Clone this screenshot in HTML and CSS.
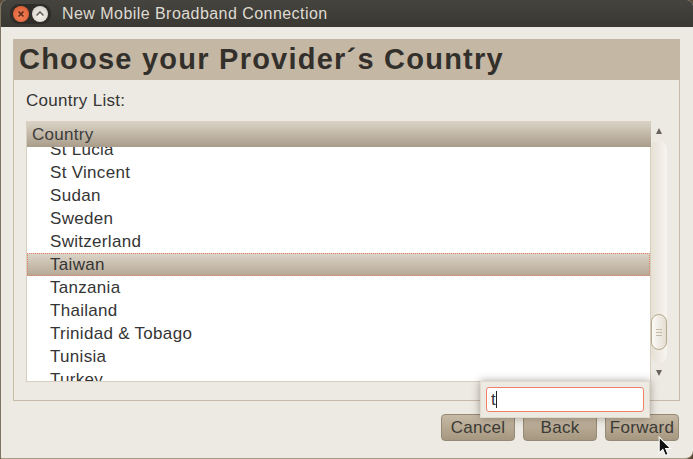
FILE: index.html
```html
<!DOCTYPE html>
<html lang="en">
<head>
<meta charset="utf-8">
<title>New Mobile Broadband Connection</title>
<link rel="stylesheet" href="styles.css">
</head>
<body>
<div class="window">
  <header class="titlebar">
    <div class="winbtns">
      <span class="winbtn close"><svg width="10" height="10" viewBox="0 0 10 10"><path d="M2.500 2.500l5 5M7.500 2.500l-5 5" stroke="#5a2a18" stroke-width="1.600" fill="none"/></svg></span>
      <span class="winbtn max"><svg width="10" height="10" viewBox="0 0 10 10"><path d="M1.500 6.500L5 3l3.500 3.500" stroke="#6b665c" stroke-width="1.600" fill="none"/></svg></span>
    </div>
    <span class="wintitle">New Mobile Broadband Connection</span>
  </header>
  <main class="content">
    <section class="panel">
      <h1 class="banner">Choose your Provider´s Country</h1>
      <div class="panelbody">
        <div class="listlabel">Country List:</div>
        <div class="listrow">
          <div class="tree">
            <div class="treehead">Country</div>
            <div class="treeview">
              <ul class="rows">
                <li>St Lucia</li>
                <li>St Vincent</li>
                <li>Sudan</li>
                <li>Sweden</li>
                <li>Switzerland</li>
                <li class="selected">Taiwan</li>
                <li>Tanzania</li>
                <li>Thailand</li>
                <li>Trinidad &amp; Tobago</li>
                <li>Tunisia</li>
                <li>Turkey</li>
              </ul>
            </div>
          </div>
          <div class="scrollbar">
            <span class="arrow up"></span>
            <div class="trough">
              <div class="thumb"><span class="grip"></span></div>
            </div>
            <span class="arrow down"></span>
          </div>
        </div>
      </div>
    </section>
    <footer class="buttons">
      <button class="btn">Cancel</button>
      <button class="btn">Back</button>
      <button class="btn">Forward</button>
    </footer>
  </main>
  <div class="search"><div class="searchinput"><span class="typed">t</span><span class="caret"></span></div></div>
  <svg class="cursor" width="15" height="21" viewBox="0 0 14 20"><path d="M1 1v15l3.500-3.200 2.400 5.700 2.600-1.100-2.400-5.500h4.700z" fill="#111" stroke="#fff" stroke-width="1"/></svg>
</div>
</body>
</html>
```

FILE: styles.css
```css
* { box-sizing: border-box; }
html, body { margin: 0; padding: 0; }
body { width: 693px; height: 459px; overflow: hidden; background: #5a4a38; font-family: "Liberation Sans", sans-serif; font-size: 17px; letter-spacing: 0.3px; color: #353535; }
.window { position: relative; width: 693px; height: 459px; display: flex; flex-direction: column; background: #edeae3; border-left: 1px solid #7d7560; border-bottom: 1px solid #a59c82; border-radius: 6px 6px 8px 2px; overflow: hidden; }
.titlebar { height: 27px; flex: none; display: flex; align-items: center; margin-left: -1px; background: linear-gradient(#46443e, #3a3833); }
.winbtns { display: flex; align-items: center; gap: 3px; margin-left: 10px; padding: 2px 3px; border-radius: 9px; background: #2f2d2a; }
.winbtn { width: 16px; height: 16px; border-radius: 50%; display: flex; align-items: center; justify-content: center; }
.close { background: radial-gradient(circle at 50% 60%, #f4835a, #d9552c); }
.max { background: radial-gradient(circle at 50% 60%, #f4f2ec, #cfcbc0); }
.wintitle { margin-left: 11px; font-size: 16px; letter-spacing: 0.45px; color: #dfdbd2; white-space: nowrap; }
.content { flex: 1; display: flex; flex-direction: column; padding: 12px 13px 0 12px; }
.panel { height: 362px; flex: none; border: 1px solid #c7baa6; display: flex; flex-direction: column; }
.banner { margin: -1px -1px 0; height: 41px; flex: none; background: #c4b7a4; color: #33302c; font-size: 29px; font-weight: 700; letter-spacing: 1.230px; line-height: 40px; padding-left: 6px; white-space: nowrap; }
.panelbody { flex: 1; padding: 12px 12px 0; display: flex; flex-direction: column; }
.listlabel { height: 18px; line-height: 18px; }
.listrow { display: flex; margin-top: 11px; height: 261px; }
.tree { width: 625px; flex: none; display: flex; flex-direction: column; background: #fff; border: 1px solid #d8cfbe; border-top-color: #dbd2c2; }
.treehead { height: 25px; flex: none; margin: 0 -1px 0 0; padding-left: 5px; line-height: 25px; background: linear-gradient(#d9d2c4, #a99c8a); color: #3c3c3c; }
.treeview { flex: 1; overflow: hidden; }
.rows { list-style: none; margin: -9px 0 0; padding: 0; }
.rows li { height: 23px; line-height: 23px; padding-left: 23px; white-space: nowrap; }
.rows .selected { background: linear-gradient(#dcd5c8, #b5a794); outline: 1px dotted #e0806a; outline-offset: -1px; }
.scrollbar { width: 16px; flex: none; display: flex; flex-direction: column; align-items: center; }
.arrow { width: 0; height: 0; border-left: 3.500px solid transparent; border-right: 3.500px solid transparent; flex: none; }
.arrow.up { border-bottom: 6px solid #6a655a; margin: 7px 0; }
.arrow.down { border-top: 6px solid #6a655a; margin: 7px 0 0; }
.trough { width: 16px; height: 222px; flex: none; border-radius: 8px; background: linear-gradient(90deg, #e6e0d4, #f7f5f0); display: flex; flex-direction: column; align-items: center; padding-top: 173px; }
.thumb { width: 16px; height: 36px; border: 1px solid #b5a98f; border-radius: 8px; background: linear-gradient(90deg, #fbfaf7, #e4ded2); display: flex; align-items: center; justify-content: center; }
.grip { width: 6px; height: 7px; border-top: 1px solid #c4baa6; border-bottom: 1px solid #c4baa6; background: linear-gradient(transparent 2px, #c4baa6 2px, #c4baa6 3px, transparent 3px); }
.buttons { display: flex; justify-content: flex-end; gap: 8px; margin: 13px 1px 0 0; }
.btn { width: 74px; height: 27px; padding: 0; border: 1px solid #948a76; border-radius: 4px; background: linear-gradient(#c7baa6, #a5977f); color: #3c3a36; font-family: "Liberation Sans", sans-serif; font-size: 17px; letter-spacing: 0.3px; }
.search { position: absolute; left: 479px; top: 381px; width: 170px; height: 37px; padding: 5px; background: #edeae3; border: 1px solid #e0dacd; box-shadow: 0 0 8px rgba(60, 50, 40, .45); }
.searchinput { height: 25px; background: #fff; border: 1px solid #f0806a; border-radius: 3px; display: flex; align-items: center; padding-left: 4px; }
.caret { width: 1px; height: 17px; background: #222; }
.cursor { position: absolute; left: 657px; top: 436px; }
```
